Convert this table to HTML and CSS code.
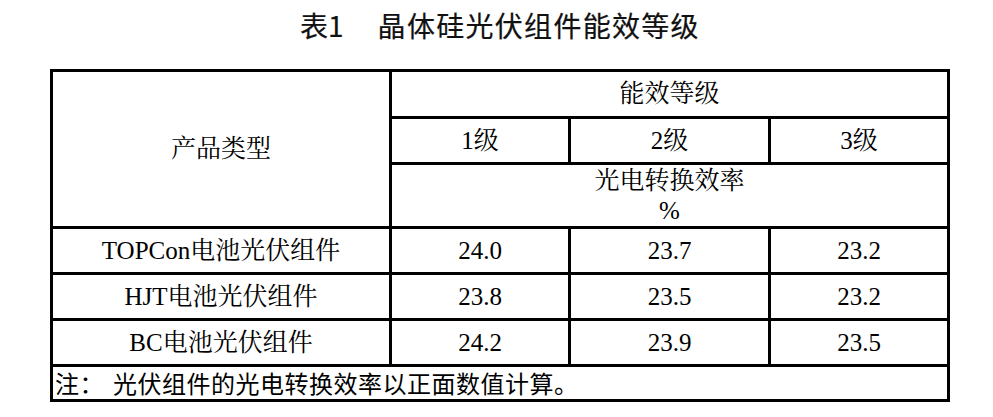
FILE: index.html
```html
<!DOCTYPE html>
<html lang="zh-CN">
<head>
<meta charset="utf-8">
<title>表1 晶体硅光伏组件能效等级</title>
<link rel="stylesheet" href="styles.css">
</head>
<body>
<div class="page">
  <h1 class="title"><span class="title-no">表1</span><span class="title-text">晶体硅光伏组件能效等级</span></h1>
  <div class="grid">
    <div class="cell product">产品类型</div>
    <div class="cell level-head">能效等级</div>
    <div class="cell">1级</div>
    <div class="cell">2级</div>
    <div class="cell">3级</div>
    <div class="cell unit"><span>光电转换效率</span><span>%</span></div>

    <div class="cell">TOPCon电池光伏组件</div>
    <div class="cell">24.0</div>
    <div class="cell">23.7</div>
    <div class="cell">23.2</div>

    <div class="cell">HJT电池光伏组件</div>
    <div class="cell">23.8</div>
    <div class="cell">23.5</div>
    <div class="cell">23.2</div>

    <div class="cell">BC电池光伏组件</div>
    <div class="cell">24.2</div>
    <div class="cell">23.9</div>
    <div class="cell">23.5</div>

    <div class="cell note"><span class="note-label">注：</span>光伏组件的光电转换效率以正面数值计算。</div>
  </div>
</div>
</body>
</html>
```

FILE: styles.css
```css
* {
  box-sizing: border-box;
}

html, body {
  margin: 0;
  padding: 0;
  background: #ffffff;
}

.page {
  width: 993px;
  height: 417px;
  padding: 7px 0 0 50px;
}

.title {
  width: 900px;
  margin: 0 0 26px 0;
  height: 36px;
  line-height: 36px;
  text-align: center;
  font-family: "Noto Sans CJK SC", "Noto Sans", sans-serif;
  font-size: 28px;
  font-weight: 400;
  color: #111111;
  -webkit-text-stroke: 0.2px #111111;
  letter-spacing: 1.3px;
}

.title-no {
  margin-right: 34px;
  letter-spacing: 0;
}

.grid {
  width: 900px;
  display: grid;
  grid-template-columns: 336px 176px 197px 176px;
  grid-template-rows: 44px 43px 61px 43px 43px 43px 32px;
  gap: 3px;
  padding: 3px;
  background: #000000;
}

.cell {
  background: #ffffff;
  display: flex;
  align-items: center;
  justify-content: center;
  font-family: "Liberation Serif", "Noto Serif CJK SC", "Noto Sans CJK SC", serif;
  font-size: 25px;
  color: #000000;
  line-height: 30px;
  white-space: nowrap;
}

.product {
  grid-row: 1 / span 3;
}

.level-head {
  grid-column: 2 / span 3;
}

.unit {
  grid-column: 2 / span 3;
  flex-direction: column;
}

.note {
  grid-column: 1 / span 4;
  justify-content: flex-start;
  padding-left: 2px;
  font-family: "Noto Sans CJK SC", "Noto Sans", sans-serif;
  font-size: 24px;
  letter-spacing: 0.5px;
}

.note-label {
  margin-right: 9px;
}
```
